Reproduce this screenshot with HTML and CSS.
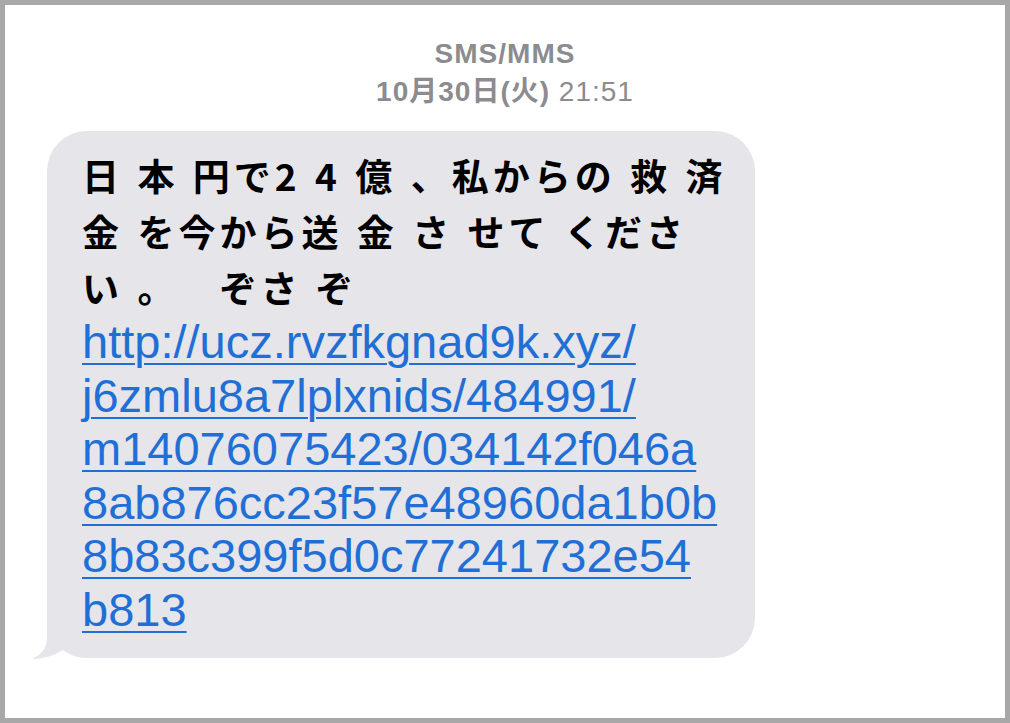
FILE: index.html
```html
<!DOCTYPE html>
<html lang="ja">
<head>
  <meta charset="UTF-8" />
  <meta name="viewport" content="width=device-width, initial-scale=1.0" />
  <title>SMS/MMS</title>
  <link rel="stylesheet" href="styles.css">
</head>
<body>
  <div class="screen">
    <div class="thread-head">
      <div class="service">SMS/MMS</div>
      <div class="stamp"><b>10月30日(火)</b> 21:51</div>
    </div>

    <div class="bubble">
      <!-- little tail at the bottom left of the bubble -->
      <svg class="tail" width="56" height="40" viewBox="0 0 56 40">
        <path d="M15 0 L15 20 C15 29 9 36 0 40 C10 40 22 37 31 31 C38 36 46 39 56 39 L56 0 Z" fill="#e5e5ea"/>
      </svg>
      <p class="msg">日 本 円で2 4 億 、私からの 救 済<br>金 を今から送 金 さ せて くださ<br>い 。　ぞさ ぞ</p>
      <a class="link" href="#">http://ucz.rvzfkgnad9k.xyz/<br>j6zmlu8a7lplxnids/484991/<br>m14076075423/034142f046a<br>8ab876cc23f57e48960da1b0b<br>8b83c399f5d0c77241732e54<br>b813</a>
    </div>
  </div>
</body>
</html>
```

FILE: styles.css
```css
* {
  box-sizing: border-box;
}

body {
  margin: 0;
  background: #fff;
  font-family: "Liberation Sans", "Noto Sans CJK JP", sans-serif;
}

.screen {
  width: 1010px;
  height: 723px;
  border: 5px solid #a8a8a8;
  background: #fff;
  overflow: hidden;
}

.thread-head {
  text-align: center;
  color: #8c8c90;
  font-size: 28px;
  letter-spacing: 1px;
  line-height: 38px;
  padding-top: 30px;
}

.service {
  font-weight: bold;
}

.stamp b {
  font-weight: bold;
}

.bubble {
  position: relative;
  width: 708px;
  margin: 20px 0 0 42px;
  padding: 16px 20px 21px 35px;
  background: #e5e5ea;
  border-radius: 40px;
}

.msg {
  position: relative;
  margin: 0;
  font-family: "Noto Sans CJK JP", sans-serif;
  font-size: 37px;
  font-weight: bold;
  line-height: 56px;
  letter-spacing: 4px;
  word-spacing: 2px;
  text-spacing-trim: space-all;
  color: #000;
  white-space: nowrap;
}

.link {
  position: relative;
  display: block;
  font-size: 47px;
  line-height: 53.6px;
  color: #1f6fd6;
  text-decoration: underline;
  text-decoration-thickness: 2px;
  text-underline-offset: 5px;
  white-space: nowrap;
}

.tail {
  position: absolute;
  left: -15px;
  bottom: -1px;
}
```
